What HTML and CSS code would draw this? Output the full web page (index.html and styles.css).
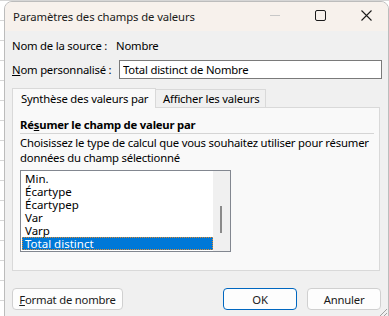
FILE: index.html
```html
<!DOCTYPE html>
<html lang="fr">
<head>
  <meta charset="utf-8">
  <title>Paramètres des champs de valeurs</title>
  <link rel="stylesheet" href="styles.css">
</head>
<body>
  <div class="sheet">
    <div class="dialog">
      <div class="titlebar">
        <div class="title">Paramètres des champs de valeurs</div>
        <div class="caption-btns">
          <svg class="cap" width="46" height="29" viewBox="0 0 46 29"><path d="M20 13.5h10" stroke="#c8c8c8" stroke-width="1"/></svg>
          <svg class="cap" width="46" height="29" viewBox="0 0 46 29"><rect x="19.5" y="8.5" width="10" height="10" rx="1.5" fill="none" stroke="#1b1b1b" stroke-width="1"/></svg>
          <svg class="cap" width="46" height="29" viewBox="0 0 46 29"><path d="M19.5 8.5l10 10M29.5 8.5l-10 10" stroke="#1b1b1b" stroke-width="1.1"/></svg>
        </div>
      </div>

      <div class="body">
        <div class="row source-row">
          <span class="label label-source">Nom de la source :</span>
          <span class="source-val">Nombre</span>
        </div>
        <div class="row name-row">
          <span class="label label-name"><u>N</u>om personnalisé :</span>
          <input class="name-input" type="text" value="Total distinct de Nombre">
        </div>

        <div class="tabs">
          <div class="tab tab-sum active">Synthèse des valeurs par</div>
          <div class="tab tab-show">Afficher les valeurs</div>
        </div>
        <div class="panel">
          <div class="group-title">Ré<u>s</u>umer le champ de valeur par</div>
          <div class="desc">Choisissez le type de calcul que vous souhaitez utiliser pour résumer<br>données du champ sélectionné</div>
          <div class="listbox">
            <div class="items">
              <div class="item">Min.</div>
              <div class="item">Écartype</div>
              <div class="item">Écartypep</div>
              <div class="item">Var</div>
              <div class="item">Varp</div>
              <div class="item selected">Total distinct</div>
            </div>
            <div class="scroll"><div class="thumb"></div></div>
          </div>
        </div>

        <div class="footer">
          <button class="btn btn-format"><u>F</u>ormat de nombre</button>
          <div class="spacer"></div>
          <button class="btn btn-ok">OK</button>
          <button class="btn btn-cancel">Annuler</button>
        </div>
      </div>
      <svg class="grip" width="9" height="9" viewBox="0 0 9 9"><path d="M9 2L2 9M9 6L6 9" stroke="#a0a0a0" stroke-width="1"/></svg>
    </div>
  </div>
</body>
</html>
```

FILE: styles.css
```css
html, body {
  margin: 0;
  padding: 0;
}

body {
  width: 389px;
  height: 316px;
  overflow: hidden;
  font-family: "Noto Sans", "Open Sans", sans-serif;
  font-size: 11.3px;
  letter-spacing: -0.2px;
  color: #000;
}

.sheet {
  height: 316px;
  padding: 1px 0 0 4px;
  box-sizing: border-box;
  background-color: #fff;
  background-image: linear-gradient(#d6d6d6 1px, transparent 1px);
  background-size: 100% 20px;
  background-position: 0 20px;
}

.dialog {
  position: relative;
  width: 385px;
  height: 330px;
  background: #f0f0f0;
  border: 1px solid #bcbcbc;
  border-radius: 8px 8px 0 0;
  box-sizing: border-box;
  overflow: hidden;
}

.titlebar {
  height: 29px;
  background: #f7f1ec;
  display: flex;
  align-items: center;
  justify-content: space-between;
}

.title {
  padding-left: 8px;
  font-size: 11.3px;
  letter-spacing: -0.1px;
  color: #1a1a1a;
}

.caption-btns {
  display: flex;
}

.cap {
  display: block;
}

.body {
  padding: 6px 7px 0 7px;
}

.row {
  display: flex;
  align-items: center;
  white-space: nowrap;
}

.source-row {
  height: 16px;
}

.label {
  flex: none;
}

.label-source {
  width: 104px;
}

.label-name {
  width: 107px;
}

.name-row {
  margin-top: 7px;
  margin-right: -1px;
  height: 19px;
}

.name-input {
  flex: 1;
  min-width: 0;
  height: 19px;
  box-sizing: border-box;
  border: 1px solid #7a7a7a;
  background: #fff;
  font: inherit;
  letter-spacing: inherit;
  color: #000;
  padding: 0 0 0 3px;
  margin: 0;
  outline: none;
}

.tabs {
  display: flex;
  align-items: flex-end;
  margin-top: 9px;
  height: 19px;
}

.tab {
  border: 1px solid #d9d9d9;
  border-bottom: none;
  background: #f0f0f0;
  height: 18px;
  line-height: 17px;
  box-sizing: border-box;
  white-space: nowrap;
}

.tab-sum {
  width: 144px;
  padding-left: 8px;
}

.tab-show {
  width: 111px;
  padding-left: 7px;
  margin-left: -1px;
}

.tab.active {
  position: relative;
  z-index: 1;
  height: 20px;
  line-height: 19px;
  margin-bottom: -1px;
  background: #f9f9f9;
}

.panel {
  background: #f9f9f9;
  border: 1px solid #d9d9d9;
  height: 164px;
  box-sizing: border-box;
  margin-right: 1px;
  padding: 9px 5px 0 7px;
}

.group-title {
  font-weight: bold;
  line-height: 15px;
  padding-bottom: 1px;
  border-bottom: 1px solid #d5d5d5;
}

.desc {
  margin-top: 2px;
  line-height: 14.5px;
  white-space: nowrap;
}

.listbox {
  display: flex;
  width: 211px;
  height: 82px;
  margin-top: 5px;
  border: 1px solid #828790;
  background: #fff;
  box-sizing: border-box;
}

.items {
  flex: 1;
  padding: 1px 0 0 1px;
}

.item {
  height: 13px;
  line-height: 13px;
  padding-left: 3px;
  font-size: 11.5px;
  letter-spacing: 0;
  white-space: nowrap;
}

.item.selected {
  background: #0078d7;
  color: #fff;
  outline: 1px dotted #e08a2c;
  outline-offset: -1px;
}

.scroll {
  width: 17px;
  background: #f0f0f0;
  position: relative;
}

.thumb {
  position: absolute;
  left: 7px;
  top: 35px;
  width: 2px;
  height: 27px;
  background: #8a8a8a;
}

.footer {
  display: flex;
  margin-top: 17px;
}

.spacer {
  flex: 1;
}

.btn {
  height: 22px;
  border: 1px solid #d0d0d0;
  border-radius: 4px;
  background: #fdfdfd;
  font: inherit;
  letter-spacing: inherit;
  color: #1a1a1a;
  padding: 0;
}

.btn-format {
  width: 111px;
}

.btn-ok {
  width: 74px;
  border-color: #0067c0;
}

.btn-cancel {
  width: 74px;
  margin-left: 10px;
}

.grip {
  position: absolute;
  right: 1px;
  top: 305px;
}
```
